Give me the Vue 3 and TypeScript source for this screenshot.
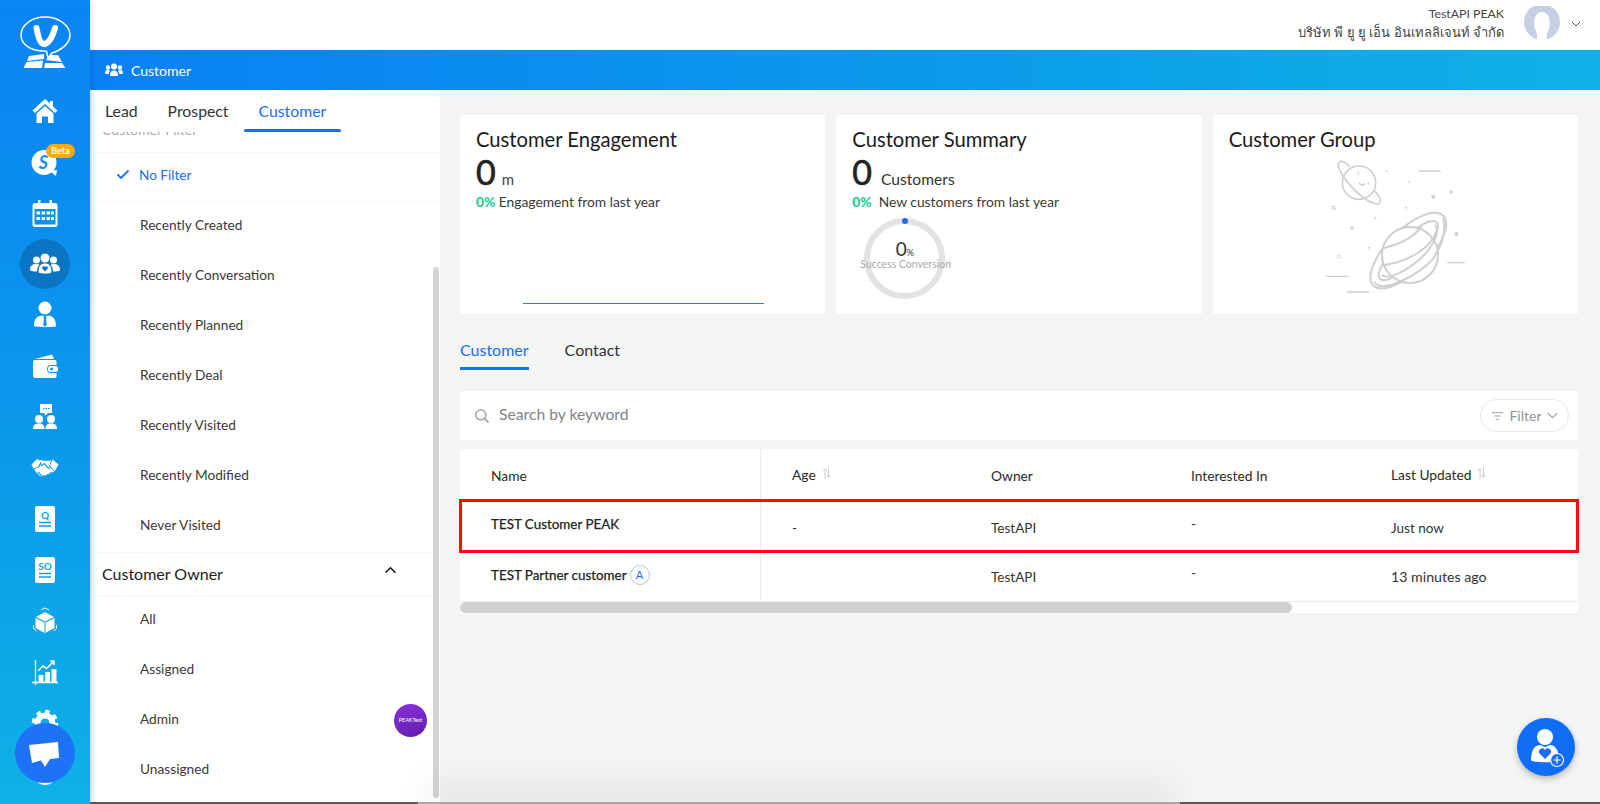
<script setup lang="ts">
const filters: string[] = ['Recently Created', 'Recently Conversation', 'Recently Planned', 'Recently Deal', 'Recently Visited', 'Recently Modified', 'Never Visited']
const owners: string[] = ['All', 'Assigned', 'Admin', 'Unassigned']
</script>

<template>
  <div class="app">
    <aside class="rail">
      <svg class="logo" viewBox="0 0 90 85" width="90" height="85">
        <path d="M44 51 C30 51 21 44 21 35 C21 25 32 17 45 17 C58 17 70 25 70 35 C70 43 62 50 52 53 L48 58 L46.500 51.500 Z" fill="none" stroke="#fff" stroke-width="1.500" />
        <path d="M36.500 28 C38 36 40 44 44 44 C49 44 53 35 55 28" fill="none" stroke="#fff" stroke-width="6" stroke-linecap="round" />
        <path d="M29 56 L44 54 L44 59 L27 61 Z M26.500 62 L43 60.500 L42 68 L23.500 68 Z M46 60 L50 55 L58 55 L62 62 Z M45 63 L62 63 L65.500 68 L44 68 Z" fill="#fff" />
      </svg>
      <nav class="rail-nav">
        <div class="nav-item">
          <svg viewBox="0 0 30 30" class="ni"><path d="M15 3 L2.500 14.500 L5 17 L15 8 L25 17 L27.500 14.500 L23 10.400 V5 H20 V7.600 Z" /><path d="M6.500 17.500 L15 10 L23.500 17.500 V27 H18 V20.500 H12 V27 H6.500 Z" /></svg>
        </div>
        <div class="nav-item">
          <svg viewBox="0 0 30 30" class="ni"><path d="M14 3 A12.500 12.500 0 1 1 14 28 A12.500 12.500 0 0 1 14 3 Z M20 24 L27 23 L26 29 Z" /><text x="13.500" y="22" class="s-mark">S</text></svg>
          <span class="beta">Beta</span>
        </div>
        <div class="nav-item">
          <svg viewBox="0 0 30 30" class="ni"><path d="M8 2 h2.500 v3 h9 v-3 h2.500 v3 h3 a2.500 2.500 0 0 1 2.500 2.500 v19 a2.500 2.500 0 0 1 -2.500 2.500 h-20 a2.500 2.500 0 0 1 -2.500 -2.500 v-19 a2.500 2.500 0 0 1 2.500 -2.500 h3 Z" /><rect x="4.500" y="11" width="21" height="15.500" fill="#0b90ec" /><path d="M6.500 13.500 h3.500 v3 h-3.500 Z M11.500 13.500 h3.500 v3 h-3.500 Z M16.500 13.500 h3.500 v3 h-3.500 Z M21 13.500 h3 v3 h-3 Z M6.500 19 h3.500 v3 h-3.500 Z M11.500 19 h3.500 v3 h-3.500 Z M16.500 19 h3.500 v3 h-3.500 Z M21 19 h3 v3 h-3 Z" /></svg>
        </div>
        <div class="nav-item active">
          <svg viewBox="0 0 30 30" class="ni"><circle cx="15" cy="9" r="4.500" /><circle cx="6.500" cy="11" r="3.500" /><circle cx="23.500" cy="11" r="3.500" /><path d="M0 21 C0 16 3 15 6.500 15 C8 15 9 15.500 9.500 16 C7.500 18 7 20 7 22.500 C3 22.500 0 22 0 21 Z M30 21 C30 16 27 15 23.500 15 C22 15 21 15.500 20.500 16 C22.500 18 23 20 23 22.500 C27 22.500 30 22 30 21 Z M8.500 23 C8.500 17 11 14.500 15 14.500 C19 14.500 21.500 17 21.500 23 C21.500 25 8.500 25 8.500 23 Z" /><path d="M15 22.500 L12.200 19.600 A1.700 1.700 0 0 1 15 17.800 A1.700 1.700 0 0 1 17.800 19.600 Z" fill="#0b75c4" /></svg>
        </div>
        <div class="nav-item">
          <svg viewBox="0 0 30 30" class="ni"><circle cx="15" cy="8" r="6.500" /><path d="M4 26 C4 19 7 15.500 12 15.500 L15 17 L18 15.500 C23 15.500 26 19 26 26 C26 27.500 4 27.500 4 26 Z" /><path d="M14 16.500 h2 l0.500 1.500 l-0.500 1 l0.800 6 l-1.800 2 l-1.800 -2 l0.800 -6 l-0.500 -1 Z" fill="#0b96e9" /></svg>
        </div>
        <div class="nav-item">
          <svg viewBox="0 0 30 30" class="ni"><path d="M5 8 L22 3.500 L24 8 Z" /><path d="M5 9 H25 a1.500 1.500 0 0 1 1.500 1.500 V14 H21 a4 4 0 0 0 0 8 H26.500 V25.500 a1.500 1.500 0 0 1 -1.500 1.500 H5 a2 2 0 0 1 -2 -2 V11 a2 2 0 0 1 2 -2 Z" /><rect x="18" y="15" width="10" height="6" rx="2.500" /><circle cx="21.500" cy="18" r="1.500" fill="#0b96e9" /></svg>
        </div>
        <div class="nav-item">
          <svg viewBox="0 0 30 30" class="ni"><path d="M10 2 H22 V11 H18 L15.500 13.500 L14 11 H10 Z" /><circle cx="9" cy="17" r="4" /><circle cx="21" cy="17" r="4" /><path d="M3 27 C3 23 5 21.500 9 21.500 C13 21.500 14.500 23.500 14.500 27 Z M15.500 27 C15.500 23.500 17 21.500 21 21.500 C25 21.500 27 23 27 27 Z" /><path d="M13 6.500 h1.500 M15.500 6.500 h1.500 M18 6.500 h1.500" stroke="#0b96e9" stroke-width="1.200" /></svg>
        </div>
        <div class="nav-item">
          <svg viewBox="0 0 30 30" class="ni"><path d="M1.500 11.500 L7 6 L11 8 L8 14 L3.500 15.500 Z M28.500 11.500 L22.500 6.500 L20 13 L25 18 Z" /><path d="M9.500 7.500 C12 7 14 8 15.500 8 L21 7.500 L19 13.500 L24 18 C23 20 21.500 19.500 20.500 19 C20 21 18.500 21.500 17 21 C16.500 22.500 15 23 13.500 22 C12.500 24 10.500 23.500 9.500 22.500 L5 18 L4.500 16 L9 14.500 L11.500 10.500 Z" /><path d="M11 13 L14 10.500 L19.500 16 M8 19 L12.500 23.500 M6.500 20.500 L10 24.500" stroke="#0b9ae8" stroke-width="1.100" fill="none" /></svg>
        </div>
        <div class="nav-item">
          <svg viewBox="0 0 30 30" class="ni"><rect x="5" y="2" width="20" height="26" rx="2" /><text x="15" y="14.500" class="doc-mark">Q</text><path d="M9 18.500 h12 M9 22 h12" stroke="#0ba0e8" stroke-width="1.500" /></svg>
        </div>
        <div class="nav-item">
          <svg viewBox="0 0 30 30" class="ni"><rect x="5" y="2" width="20" height="26" rx="2" /><text x="15" y="14.500" class="doc-mark">SO</text><path d="M9 18.500 h12 M9 22 h12" stroke="#0ba5e7" stroke-width="1.500" /></svg>
        </div>
        <div class="nav-item">
          <svg viewBox="0 0 30 30" class="ni"><path d="M15 6 L24 11 L15 15.500 L6 11 Z" /><path d="M5.500 12 L14.500 16.500 V27 L5.500 22 Z M24.500 12 L15.500 16.500 V27 L24.500 22 Z" /><path d="M11 4 L15 2 L19 4 M3.500 19 V22.500 L6.500 25 M26.500 19 V22.500 L23.500 25" fill="none" stroke="#fff" stroke-width="1" /></svg>
        </div>
        <div class="nav-item">
          <svg viewBox="0 0 30 30" class="ni"><path d="M5.500 3 V28 M2 25.500 H28" fill="none" stroke="#fff" stroke-width="1.300" /><rect x="8.500" y="18" width="5" height="7" /><rect x="15" y="15" width="5" height="10" /><rect x="21.500" y="12" width="5" height="13" /><path d="M8 14 L13 9 L16.500 11.500 L23.500 4.500 M20 4 H24 V8" fill="none" stroke="#fff" stroke-width="1.500" /></svg>
        </div>
        <div class="nav-item">
          <svg viewBox="0 0 30 30" class="ni"><circle cx="15" cy="15" r="7.500" fill="none" stroke="#fff" stroke-width="6" /><circle cx="15" cy="15" r="11.500" fill="none" stroke="#fff" stroke-width="3.500" stroke-dasharray="4.500 4.500" /></svg>
        </div>
        <div class="nav-item">
          <svg viewBox="0 0 30 30" class="ni"><circle cx="15" cy="15" r="11" /></svg>
        </div>
      </nav>
      <button class="chat-fab" aria-label="Chat">
        <svg viewBox="0 0 60 60" width="60" height="60"><path d="M14 22 L43 19 L44 35 L35 36 L30 44 L26 37.500 L17 40 Z" fill="#fff" /></svg>
      </button>
    </aside>

    <div class="shell">
      <header class="top">
        <div class="who">
          <div class="who-name">TestAPI PEAK</div>
          <div class="who-co">บริษัท พี ยู ยู เอ็น อินเทลลิเจนท์ จำกัด</div>
        </div>
        <svg class="avatar" viewBox="0 0 36 36" width="36" height="36">
          <defs><clipPath id="av"><circle cx="18" cy="16" r="18" /></clipPath></defs>
          <g clip-path="url(#av)"><rect width="36" height="36" fill="#c6d0e4" /><path d="M12 36 C14 30 13 27 11 23 C8.500 14 12 6 18 6 C24 6 27.500 14 25 23 C23 27 22 30 24 36 Z" fill="#fff" /></g>
        </svg>
        <svg class="top-chev" viewBox="0 0 10 6" width="10" height="6"><path d="M1 1 L5 5 L9 1" fill="none" stroke="#555" stroke-width="1" /></svg>
      </header>

      <div class="crumb">
        <svg viewBox="0 0 18 14" width="18" height="14" fill="#fff"><circle cx="9" cy="3.500" r="3" /><circle cx="3" cy="4.500" r="2.200" /><circle cx="15" cy="4.500" r="2.200" /><path d="M0 9.500 C0 7.500 1.500 7 3 7 C4 7 4.600 7.300 5 7.800 C4 8.700 3.800 9.800 3.800 11 L0.500 11 Z M18 9.500 C18 7.500 16.500 7 15 7 C14 7 13.400 7.300 13 7.800 C14 8.700 14.200 9.800 14.200 11 L17.500 11 Z M5 13 C5 9 6.500 7.500 9 7.500 C11.500 7.500 13 9 13 13 Z" /></svg>
        <span>Customer</span>
      </div>

      <div class="body">
        <section class="panel">
          <div class="panel-tabs">
            <span class="ptab">Lead</span>
            <span class="ptab">Prospect</span>
            <span class="ptab on">Customer</span>
          </div>
          <div class="clipped"><span>Customer Filter</span></div>
          <div class="row-check">
            <svg viewBox="0 0 14 11" width="14" height="11"><path d="M1.500 5.500 L5 9 L12.500 1.500" fill="none" stroke="#1a6ef5" stroke-width="1.800" /></svg>
            <span>No Filter</span>
          </div>
          <div v-for="f in filters" :key="f" class="item">{{ f }}</div>
          <div class="owner-head">
            <span>Customer Owner</span>
            <svg viewBox="0 0 14 9" width="13" height="8"><path d="M1.500 7.500 L7 2 L12.500 7.500" fill="none" stroke="#222" stroke-width="1.800" /></svg>
          </div>
          <div v-for="o in owners" :key="o" class="item owner">
            <span>{{ o }}</span>
            <span v-if="o === 'Admin'" class="peak">PEAKTest</span>
          </div>
          <div class="v-thumb"></div>
        </section>

        <main class="main">
          <div class="cards">
            <article class="card">
              <h3>Customer Engagement</h3>
              <div class="stat"><b>0</b><span class="unit-m">m</span></div>
              <div class="delta"><em>0%</em> Engagement from last year</div>
              <div class="flat-line"></div>
            </article>
            <article class="card">
              <h3>Customer Summary</h3>
              <div class="stat"><b>0</b><span class="unit">Customers</span></div>
              <div class="delta"><em>0%</em> &nbsp;New customers from last year</div>
              <div class="donut">
                <span class="donut-dot"></span>
                <div class="donut-val">0<small>%</small></div>
                <div class="donut-cap">Success Conversion</div>
              </div>
            </article>
            <article class="card">
              <h3>Customer Group</h3>
              <svg class="planets" viewBox="408 480 420 405" width="140" height="135" fill="none" stroke="#cfcfcf" stroke-width="6">
                <path d="M446 487 C455 478 470 490 478 500 M570 605 C575 595 560 580 552 572" stroke-width="5" />
                <circle cx="507" cy="548" r="50" stroke-width="5" />
                <path d="M446 487 C438 505 470 550 510 585 C540 610 570 620 570 605" stroke-width="5" />
                <path d="M505 518 v2 M508 550 C512 556 520 556 524 552 M535 550 v2" stroke-width="5" stroke-linecap="round" />
                <ellipse cx="655" cy="752" rx="148" ry="62" transform="rotate(-45 655 752)" />
                <ellipse cx="655" cy="752" rx="120" ry="36" transform="rotate(-45 655 752)" />
                <circle cx="660" cy="765" r="84" fill="#fff" />
                <path d="M580 745 C620 735 670 715 694 680 M585 795 C650 785 720 750 742 690" />
                <path d="M553 845 C575 885 685 825 730 775 C750 745 770 700 760 655" />
                <path d="M575 825 C600 845 680 795 715 750 C735 722 750 690 735 675" />
                <path d="M686 513 h66 M772 788 h52 M408 829 h68 M471 876 h66" stroke-width="4" />
                <path d="M425 617 l12 12 M437 617 l-12 12 M481 679 l10 10 M491 679 l-10 10 M779 571 l9 9 M788 571 l-9 9" stroke-width="3.500" />
                <circle cx="447" cy="770" r="5" stroke-width="2.500" />
                <g fill="#cfcfcf" stroke="none"><circle cx="730" cy="590" r="6" /><circle cx="799" cy="702" r="6" /><circle cx="590" cy="514" r="3" /><circle cx="657" cy="545" r="3" /><circle cx="648" cy="623" r="3" /><circle cx="556" cy="654" r="3" /><circle cx="537" cy="743" r="3" /></g>
              </svg>
            </article>
          </div>

          <div class="tabs">
            <span class="tab on">Customer</span>
            <span class="tab">Contact</span>
          </div>

          <div class="search">
            <svg viewBox="0 0 16 16" width="16" height="16"><circle cx="6.800" cy="6.800" r="5" fill="none" stroke="#a9aeb3" stroke-width="1.800" /><path d="M10.500 10.500 L14.500 14.500" stroke="#a9aeb3" stroke-width="2" /></svg>
            <span class="ph">Search by keyword</span>
            <button class="filter">
              <svg viewBox="0 0 14 10" width="13" height="10"><path d="M1 1.500 H13 M3.500 5 H10.500 M5.500 8.500 H8.500" stroke="#9a9fa3" stroke-width="1.100" /></svg>
              <span>Filter</span>
              <svg viewBox="0 0 12 7" width="11" height="7"><path d="M1 1 L6 6 L11 1" fill="none" stroke="#8e9397" stroke-width="1.100" /></svg>
            </button>
          </div>

          <div class="table">
            <div class="tr thead">
              <div class="td">Name</div>
              <div class="td up">Age
                <svg class="sort" viewBox="0 0 9 14" width="9" height="14"><path d="M3 13 V3 M1 5 L3 2.500 L5 5 M6.500 1 V11 M4.500 9 L6.500 11.500 L8.500 9" fill="none" stroke="#cfcfcf" stroke-width="1" /></svg>
              </div>
              <div class="td">Owner</div>
              <div class="td">Interested In</div>
              <div class="td up">Last Updated
                <svg class="sort" viewBox="0 0 9 14" width="9" height="14"><path d="M3 13 V3 M1 5 L3 2.500 L5 5 M6.500 1 V11 M4.500 9 L6.500 11.500 L8.500 9" fill="none" stroke="#cfcfcf" stroke-width="1" /></svg>
              </div>
            </div>
            <div class="tr marked">
              <div class="td name">TEST Customer PEAK</div>
              <div class="td">-</div>
              <div class="td">TestAPI</div>
              <div class="td dash">-</div>
              <div class="td">Just now</div>
            </div>
            <div class="tr plain">
              <div class="td name">TEST Partner customer <span class="a-badge">A</span></div>
              <div class="td"></div>
              <div class="td">TestAPI</div>
              <div class="td dash">-</div>
              <div class="td wide">13 minutes ago</div>
            </div>
            <div class="h-track"><div class="h-thumb"></div></div>
          </div>
        </main>
      </div>
    </div>

    <button class="add-fab" aria-label="Add customer">
      <svg viewBox="0 0 58 58" width="58" height="58">
        <circle cx="28" cy="19" r="8" fill="#fff" />
        <path d="M14 42 C14 32 18 27 23 27 L28 29 L33 27 C38 27 42 32 42 42 C42 45 14 45 14 42 Z" fill="#fff" />
        <path d="M28 41 L22.500 35.500 A3.200 3.200 0 0 1 28 32 A3.200 3.200 0 0 1 33.500 35.500 Z" fill="#1a6ef5" />
        <circle cx="40" cy="42" r="6.500" fill="#1a6ef5" stroke="#fff" stroke-width="1.200" />
        <path d="M40 38.500 V45.500 M36.500 42 H43.500" stroke="#fff" stroke-width="1.200" />
      </svg>
    </button>

    <div class="screen-shadow"></div>
    <div class="screen-edge"></div>
  </div>
</template>

<style scoped>
.app {
  display: flex;
  position: relative;
  width: 1600px;
  height: 804px;
  overflow: hidden;
  font-family: Lato, "Noto Sans", "Noto Sans CJK SC", sans-serif;
  color: #2b2b2b;
  background: #f3f5f5;
}
.rail {
  flex: 0 0 90px;
  position: relative;
  z-index: 3;
  background: linear-gradient(180deg, #0b84f4 0%, #0b9be9 60%, #0fb1e6 100%);
  box-shadow: 2px 0 5px rgba(0, 0, 0, .12);
}
.logo { display: block; }
.rail-nav { display: flex; flex-direction: column; }
.nav-item {
  position: relative;
  height: 51px;
  display: flex;
  align-items: center;
  justify-content: center;
}
.nav-item.active::before {
  content: "";
  position: absolute;
  left: 20px;
  top: 1px;
  width: 50px;
  height: 50px;
  border-radius: 50%;
  background: #0b75c4;
}
.ni { position: relative; width: 30px; height: 30px; fill: #fff; }
.s-mark { font: italic 700 18px Lato, sans-serif; fill: #0b8ff0; text-anchor: middle; }
.doc-mark { font: 700 10px Lato, sans-serif; fill: #0ba3e8; text-anchor: middle; }
.beta {
  position: absolute;
  left: 46px;
  top: 8px;
  height: 14px;
  width: 29px;
  border-radius: 7px;
  background: #f5ab0c;
  color: #fff;
  font-size: 9px;
  font-weight: 700;
  line-height: 14px;
  text-align: center;
}
.chat-fab {
  position: absolute;
  left: 15px;
  top: 723px;
  width: 60px;
  height: 60px;
  padding: 0;
  border: 0;
  border-radius: 50%;
  background: #1e72f5;
}
.chat-fab svg { display: block; }
.shell { flex: 1; display: flex; flex-direction: column; min-width: 0; }
.top {
  height: 50px;
  background: #fff;
  display: flex;
  align-items: center;
  justify-content: flex-end;
  padding-right: 19px;
}
.who { text-align: right; line-height: 19px; color: #444; margin: -4px 20px 0 0; }
.who-name { font-size: 12.300px; }
.who-co { font-size: 13px; }
.avatar { margin-top: -2px; }
.top-chev { margin-left: 11px; margin-top: -2px; }
.crumb {
  height: 40px;
  display: flex;
  align-items: center;
  gap: 8px;
  padding-left: 15px;
  background: linear-gradient(90deg, #0a80f5 0%, #0b9ce9 60%, #0fb2e6 100%);
  color: #fff;
  font-size: 14px;
}
.body { flex: 1; display: flex; min-height: 0; }
.panel {
  position: relative;
  flex: 0 0 350px;
  background: #fff;
  box-shadow: inset 3px 0 4px -2px rgba(0, 0, 0, .1);
}
.panel-tabs {
  height: 42px;
  display: flex;
  padding-left: 15px;
  gap: 30px;
  font-size: 15.800px;
  line-height: 42px;
  color: #333;
  position: relative;
}
.ptab.on { color: #1a6ef5; }
.ptab.on::after {
  content: "";
  position: absolute;
  left: 154px;
  bottom: 0;
  width: 97px;
  height: 3px;
  border-radius: 2px;
  background: #1a6ef5;
}
.clipped {
  height: 20px;
  overflow: hidden;
  border-bottom: 1px solid #f5f6f6;
  padding-left: 12px;
  color: #aaa;
  font-size: 14px;
  line-height: 4px;
}
.clipped span { display: block; margin-top: -4px; }
.row-check {
  height: 49px;
  box-sizing: border-box;
  display: flex;
  align-items: center;
  gap: 9px;
  padding: 0 0 5px 26px;
  font-size: 13.600px;
  color: #1a6ef5;
  border-bottom: 1px solid #f5f6f6;
}
.item {
  height: 50px;
  box-sizing: border-box;
  display: flex;
  align-items: center;
  justify-content: space-between;
  padding: 0 13px 6px 50px;
  font-size: 13.700px;
  color: #3a3a3a;
}
.item.owner { padding-bottom: 8px; }
.owner-head {
  height: 45px;
  box-sizing: border-box;
  display: flex;
  align-items: center;
  justify-content: space-between;
  padding: 0 43px 3px 12px;
  border-top: 1px solid #f5f6f6;
  border-bottom: 1px solid #f5f6f6;
  font-size: 16px;
  color: #222;
}
.owner-head svg { margin-top: -7px; }
.peak {
  width: 33px;
  height: 33px;
  margin-top: 4px;
  border-radius: 50%;
  background: linear-gradient(160deg, #8c30e2, #5e1ea6);
  color: #fff;
  font-size: 5.500px;
  line-height: 33px;
  text-align: center;
  white-space: nowrap;
}
.v-thumb {
  position: absolute;
  right: 1px;
  top: 177px;
  width: 6px;
  height: 531px;
  border-radius: 3px;
  background: #d4d4d4;
}
.main { flex: 1; padding: 25px 22px 0 20px; min-width: 0; }
.cards { display: grid; grid-template-columns: repeat(3, 1fr); gap: 11px; }
.card {
  height: 199px;
  box-sizing: border-box;
  position: relative;
  padding: 11px 16px 0;
  background: #fff;
  border-radius: 2px;
}
.card h3 { margin: 0; font-size: 20.200px; line-height: 26px; font-weight: 400; color: #1c1c1c; }
.stat { display: flex; align-items: baseline; height: 38px; margin-top: 1px; }
.stat b { font-size: 34px; font-weight: 400; line-height: 38px; color: #222; -webkit-text-stroke: .6px #222; }
.unit-m { font-size: 15px; margin-left: 6px; color: #444; }
.unit { font-size: 15.600px; margin-left: 9px; color: #333; }
.delta { font-size: 13.800px; line-height: 20px; margin-top: 1px; color: #3a3a3a; }
.delta em { font-style: normal; color: #17c98e; font-weight: 700; }
.flat-line { position: absolute; left: 63px; top: 188px; width: 241px; height: 1px; background: #2a78ff; }
.donut {
  position: relative;
  width: 81px;
  height: 81px;
  box-sizing: border-box;
  margin: 6px 0 0 12px;
  border: 6px solid #e3e3e3;
  border-radius: 50%;
  text-align: center;
}
.donut-dot { position: absolute; left: 31.500px; top: -6px; width: 6px; height: 6px; border-radius: 50%; background: #1a6ef5; }
.donut-val { font-size: 19px; line-height: 22px; margin-top: 14px; color: #333; }
.donut-val small { font-size: 9px; }
.donut-cap { margin: -6px -10px 0; font-size: 10.500px; line-height: 13px; color: #a9a9a9; white-space: nowrap; }
.planets { display: block; margin: 8px 0 0 97px; }
.tabs { display: flex; gap: 36px; height: 39px; margin-top: 19px; font-size: 16px; line-height: 33px; }
.tab { height: 34px; color: #333; }
.tab.on { color: #1a6ef5; border-bottom: 3px solid #1a6ef5; }
.search {
  height: 49px;
  margin-top: 19px;
  display: flex;
  align-items: center;
  padding: 0 9px 0 14px;
  background: #fff;
  border-radius: 3px;
  box-sizing: border-box;
}
.ph { margin: -3px 0 0 9px; font-size: 15.700px; color: #7c8389; }
.filter {
  margin-left: auto;
  width: 89px;
  height: 33px;
  display: flex;
  align-items: center;
  justify-content: center;
  gap: 5px;
  padding: 0;
  background: #fff;
  border: 1px solid #e6e8e8;
  border-radius: 17px;
  font: 14px Lato, sans-serif;
  color: #8e9397;
}
.table { margin-top: 9px; background: #fff; border-radius: 3px; }
.tr { display: grid; grid-template-columns: 300px 200px 200px 200px 1fr; }
.thead { height: 51px; }
.plain { height: 49px; }
.marked { position: relative; z-index: 1; height: 52px; outline: 3px solid #fb0f05; outline-offset: -2px; }
.td {
  display: flex;
  align-items: center;
  box-sizing: border-box;
  padding-left: 31px;
  padding-top: 4px;
  font-size: 13.500px;
  color: #333;
}
.td:nth-child(2) { border-left: 1px solid #e9ebeb; }
.thead .td { padding-top: 2px; color: #2a2a2a; font-size: 13.800px; }
.thead .up { padding-bottom: 2px; }
.plain .td { padding-top: 0; }
.wide { font-size: 14.200px; }
.dash { padding-bottom: 8px; }
.name { padding-bottom: 8px; color: #222; font-size: 13.400px; -webkit-text-stroke: .25px #222; }
.plain .name { padding-bottom: 4px; }
.sort { margin-left: 6px; margin-top: -3px; }
.a-badge {
  width: 20px;
  height: 20px;
  margin-left: 3px;
  border: 1px solid #a9c6f8;
  border-radius: 50%;
  box-sizing: border-box;
  color: #1a6ef5;
  font-size: 11px;
  line-height: 18px;
  text-align: center;
  -webkit-text-stroke: 0;
}
.h-track { height: 12px; border-top: 1px solid #e9ebeb; box-sizing: border-box; }
.h-thumb { width: 832px; height: 11px; border-radius: 6px; background: #d0d0d0; }
.add-fab {
  position: absolute;
  left: 1517px;
  top: 718px;
  width: 58px;
  height: 58px;
  padding: 0;
  border: 0;
  border-radius: 50%;
  background: #0f6ef5;
  box-shadow: 0 3px 6px rgba(0, 0, 0, .25);
}
.add-fab svg { display: block; }
.screen-shadow {
  position: absolute;
  left: 425px;
  bottom: -4px;
  width: 750px;
  height: 36px;
  background: linear-gradient(180deg, rgba(0, 0, 0, 0), rgba(0, 0, 0, .08));
  filter: blur(12px);
  pointer-events: none;
}
.screen-edge {
  position: absolute;
  left: 0;
  right: 0;
  bottom: 0;
  height: 2px;
  background: linear-gradient(90deg, #5a5a5a 0 418px, #a8a8a8 418px 1180px, #5a5a5a 1180px);
  pointer-events: none;
}
</style>
